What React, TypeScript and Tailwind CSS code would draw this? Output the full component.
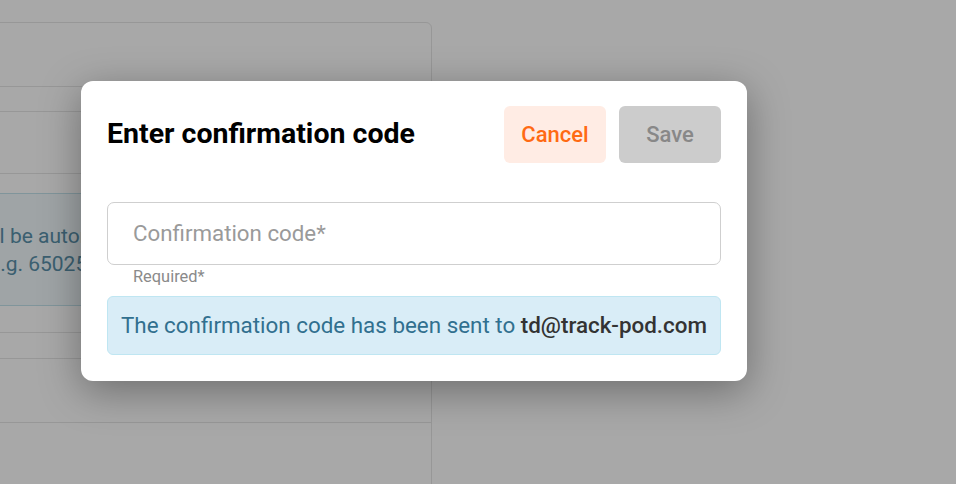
export default function App() {
    return (
        <div className="relative h-[484px] w-[956px] overflow-hidden bg-white font-['Roboto',sans-serif]">
            {/* page behind the dialog */}
            <div className="ml-[-20px] mt-[22px] h-[600px] w-[452px] rounded-tr-[6px] border border-[#e6e6e6]">
                <div className="h-[64px] border-b border-[#e6e6e6]" />
                <div className="h-[25px] border-b border-[#e6e6e6]" />
                <div className="h-[62px] border-b border-[#e6e6e6]" />
                <div className="pt-[19px]">
                    <div className="flex h-[113px] w-[120px] flex-col justify-center overflow-hidden border-y border-[#c3e2ec] bg-[#f1f9fc] text-[21px] leading-[28px] text-[#5a91ab]">
                        <div className="ml-[-149px] whitespace-nowrap">Phone number will be automatically formatted</div>
                        <div className="ml-[8px] whitespace-nowrap">e.g. 6502530000</div>
                    </div>
                </div>
                <div className="h-[27px] border-b border-[#e6e6e6]" />
                <div className="h-[26px] border-b border-[#e6e6e6]" />
                <div className="h-[64px] border-b border-[#e6e6e6]" />
            </div>

            {/* overlay */}
            <div className="absolute inset-0 bg-black/[0.34]" />

            {/* dialog */}
            <div className="absolute left-[81px] top-[81px] w-[666px] rounded-[12px] bg-white px-[26px] pb-[26px] pt-[25px] shadow-[0_10px_40px_rgba(0,0,0,0.35)]">
                <div className="flex h-[57px] items-center justify-between">
                    <h2 className="text-[28.5px] font-bold leading-none text-black">Enter confirmation code</h2>
                    <div className="flex gap-[13px]">
                        <button className="h-[57px] w-[102px] rounded-[6px] bg-[#ffece4] text-[22px] font-medium text-[#ff6a13]">
                            Cancel
                        </button>
                        <button className="h-[57px] w-[102px] rounded-[6px] bg-[#cccccc] text-[22px] font-medium text-[#888888]">
                            Save
                        </button>
                    </div>
                </div>

                <div className="mt-[39px] flex h-[63px] items-center rounded-[7px] border border-[#cfcfcf] px-[25px]">
                    <span className="text-[22.3px] text-[#9a9a9a]">Confirmation code*</span>
                </div>
                <div className="mt-[2px] pl-[26px] text-[16.4px] leading-[20px] text-[#8a8a8a]">Required*</div>

                <div className="mt-[9px] flex h-[59px] items-center rounded-[6px] border border-[#bfe6f2] bg-[#d9edf7] px-[13px] text-[22.4px] text-[#31708f]">
                    <span className="whitespace-nowrap">
                        The confirmation code has been sent to{' '}
                        <span className="font-medium text-[#333333]">td@track-pod.com</span>
                    </span>
                </div>
            </div>
        </div>
    );
}
